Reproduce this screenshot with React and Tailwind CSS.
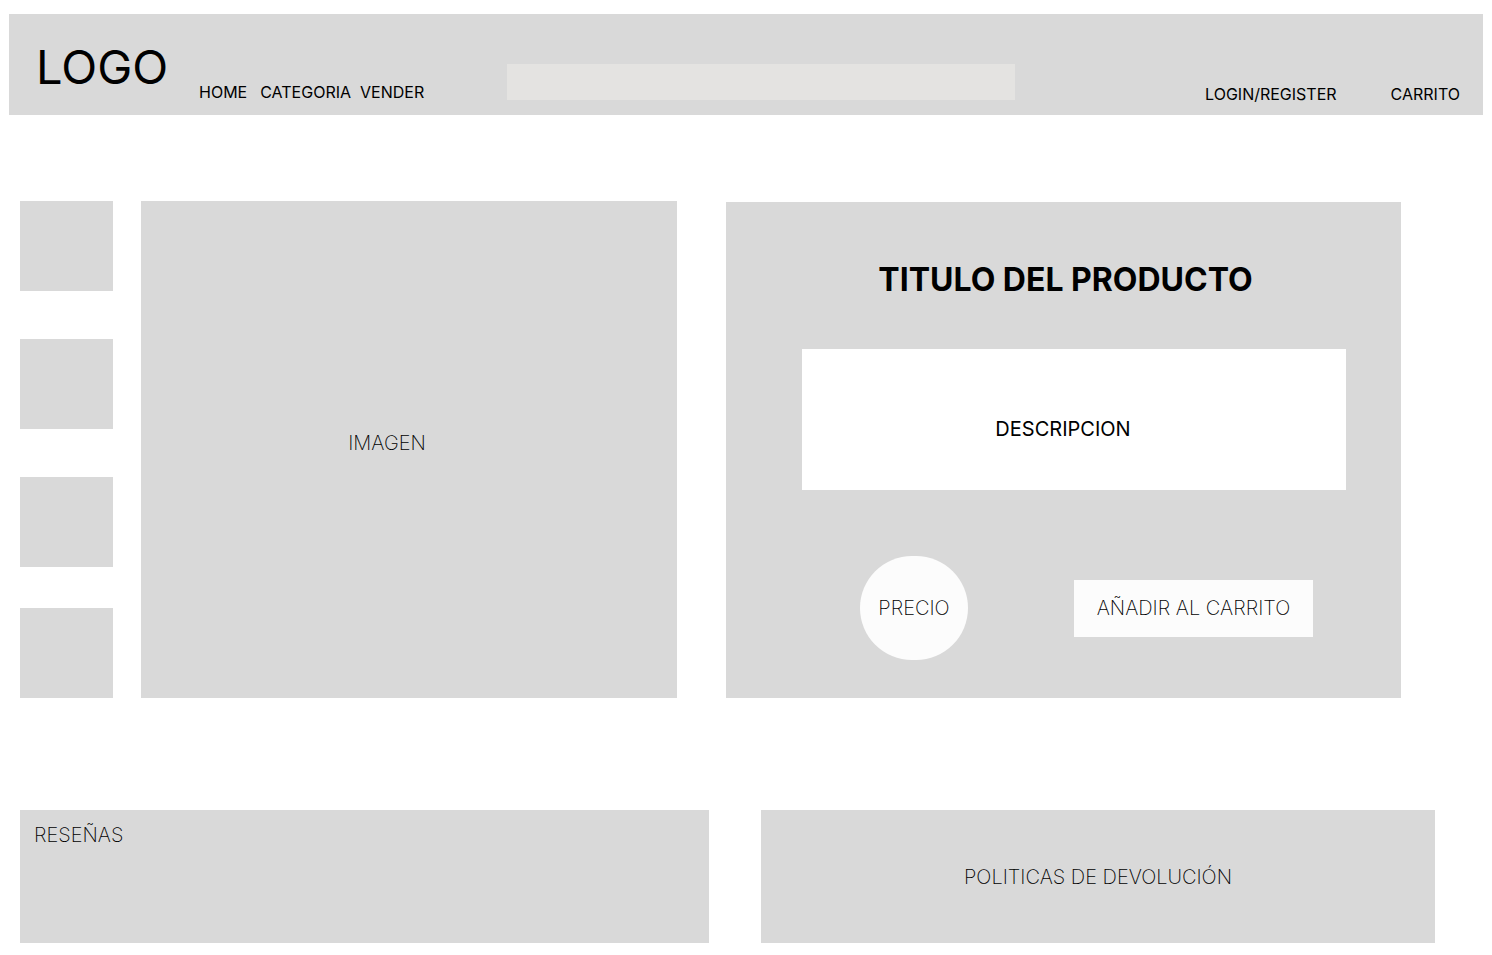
import React from 'react';

const thumbs = ['mt-0', 'mt-[48px]', 'mt-[48px]', 'mt-[41px]'];

const App = () => {
  return (
    <div className="min-h-screen w-full bg-white font-['Inter',sans-serif] text-black pt-[14px]">
      {/* Header */}
      <header className="mx-[9px] h-[101px] bg-[#d9d9d9] flex items-start">
        <div className="w-[190px] pl-[27px] pt-[29px] text-[47px] leading-none">LOGO</div>
        <nav className="w-[308px] pt-[70px] flex text-[16px] leading-none">
          <span className="mr-[13px]">HOME</span>
          <span className="mr-[9px]">CATEGORIA</span>
          <span>VENDER</span>
        </nav>
        <div className="mt-[50px] w-[508px] h-[36px] bg-[#e4e3e1]"></div>
        <div className="ml-auto pr-[23px] pt-[72px] flex text-[16px] leading-none">
          <a href="#" className="mr-[54px]">LOGIN/REGISTER</a>
          <a href="#">CARRITO</a>
        </div>
      </header>

      {/* Product */}
      <section className="mt-[86px] ml-[20px] flex items-start">
        <div className="w-[93px] flex flex-col">
          {thumbs.map((m, i) => (
            <div key={i} className={`${m} h-[90px] bg-[#d9d9d9]`}></div>
          ))}
        </div>

        <div className="ml-[28px] w-[536px] h-[497px] bg-[#d9d9d9] flex items-center justify-center pr-[44px] pb-[13px]">
          <span className="text-[20px] leading-none font-extralight">IMAGEN</span>
        </div>

        <div className="ml-[49px] mt-[1px] w-[675px] h-[496px] bg-[#d9d9d9] flex flex-col">
          <h1 className="pt-[62px] text-center text-[32px] leading-none font-bold pl-[4px]">
            TITULO DEL PRODUCTO
          </h1>
          <div className="mt-[53px] ml-[76px] w-[544px] h-[141px] bg-white flex items-center justify-center pr-[22px] pt-[19px]">
            <span className="text-[20px] leading-none">DESCRIPCION</span>
          </div>
          <div className="mt-[66px] ml-[134px] flex items-center">
            <div className="w-[108px] h-[104px] rounded-full bg-[#fcfcfc] flex items-center justify-center">
              <span className="text-[20px] leading-none font-extralight">PRECIO</span>
            </div>
            <button className="ml-[106px] w-[239px] h-[57px] bg-[#fcfcfc] flex items-center justify-center text-[20px] leading-none font-extralight">
              AÑADIR AL CARRITO
            </button>
          </div>
        </div>
      </section>

      {/* Reviews / policies */}
      <section className="mt-[112px] ml-[20px] flex">
        <div className="w-[689px] h-[133px] bg-[#d9d9d9] pl-[14px] pt-[14px]">
          <span className="text-[20px] leading-none font-extralight">RESEÑAS</span>
        </div>
        <div className="ml-[52px] w-[674px] h-[133px] bg-[#d9d9d9] flex items-center justify-center">
          <span className="text-[20px] leading-none font-extralight">POLITICAS DE DEVOLUCIÓN</span>
        </div>
      </section>
    </div>
  );
};

export default App;
